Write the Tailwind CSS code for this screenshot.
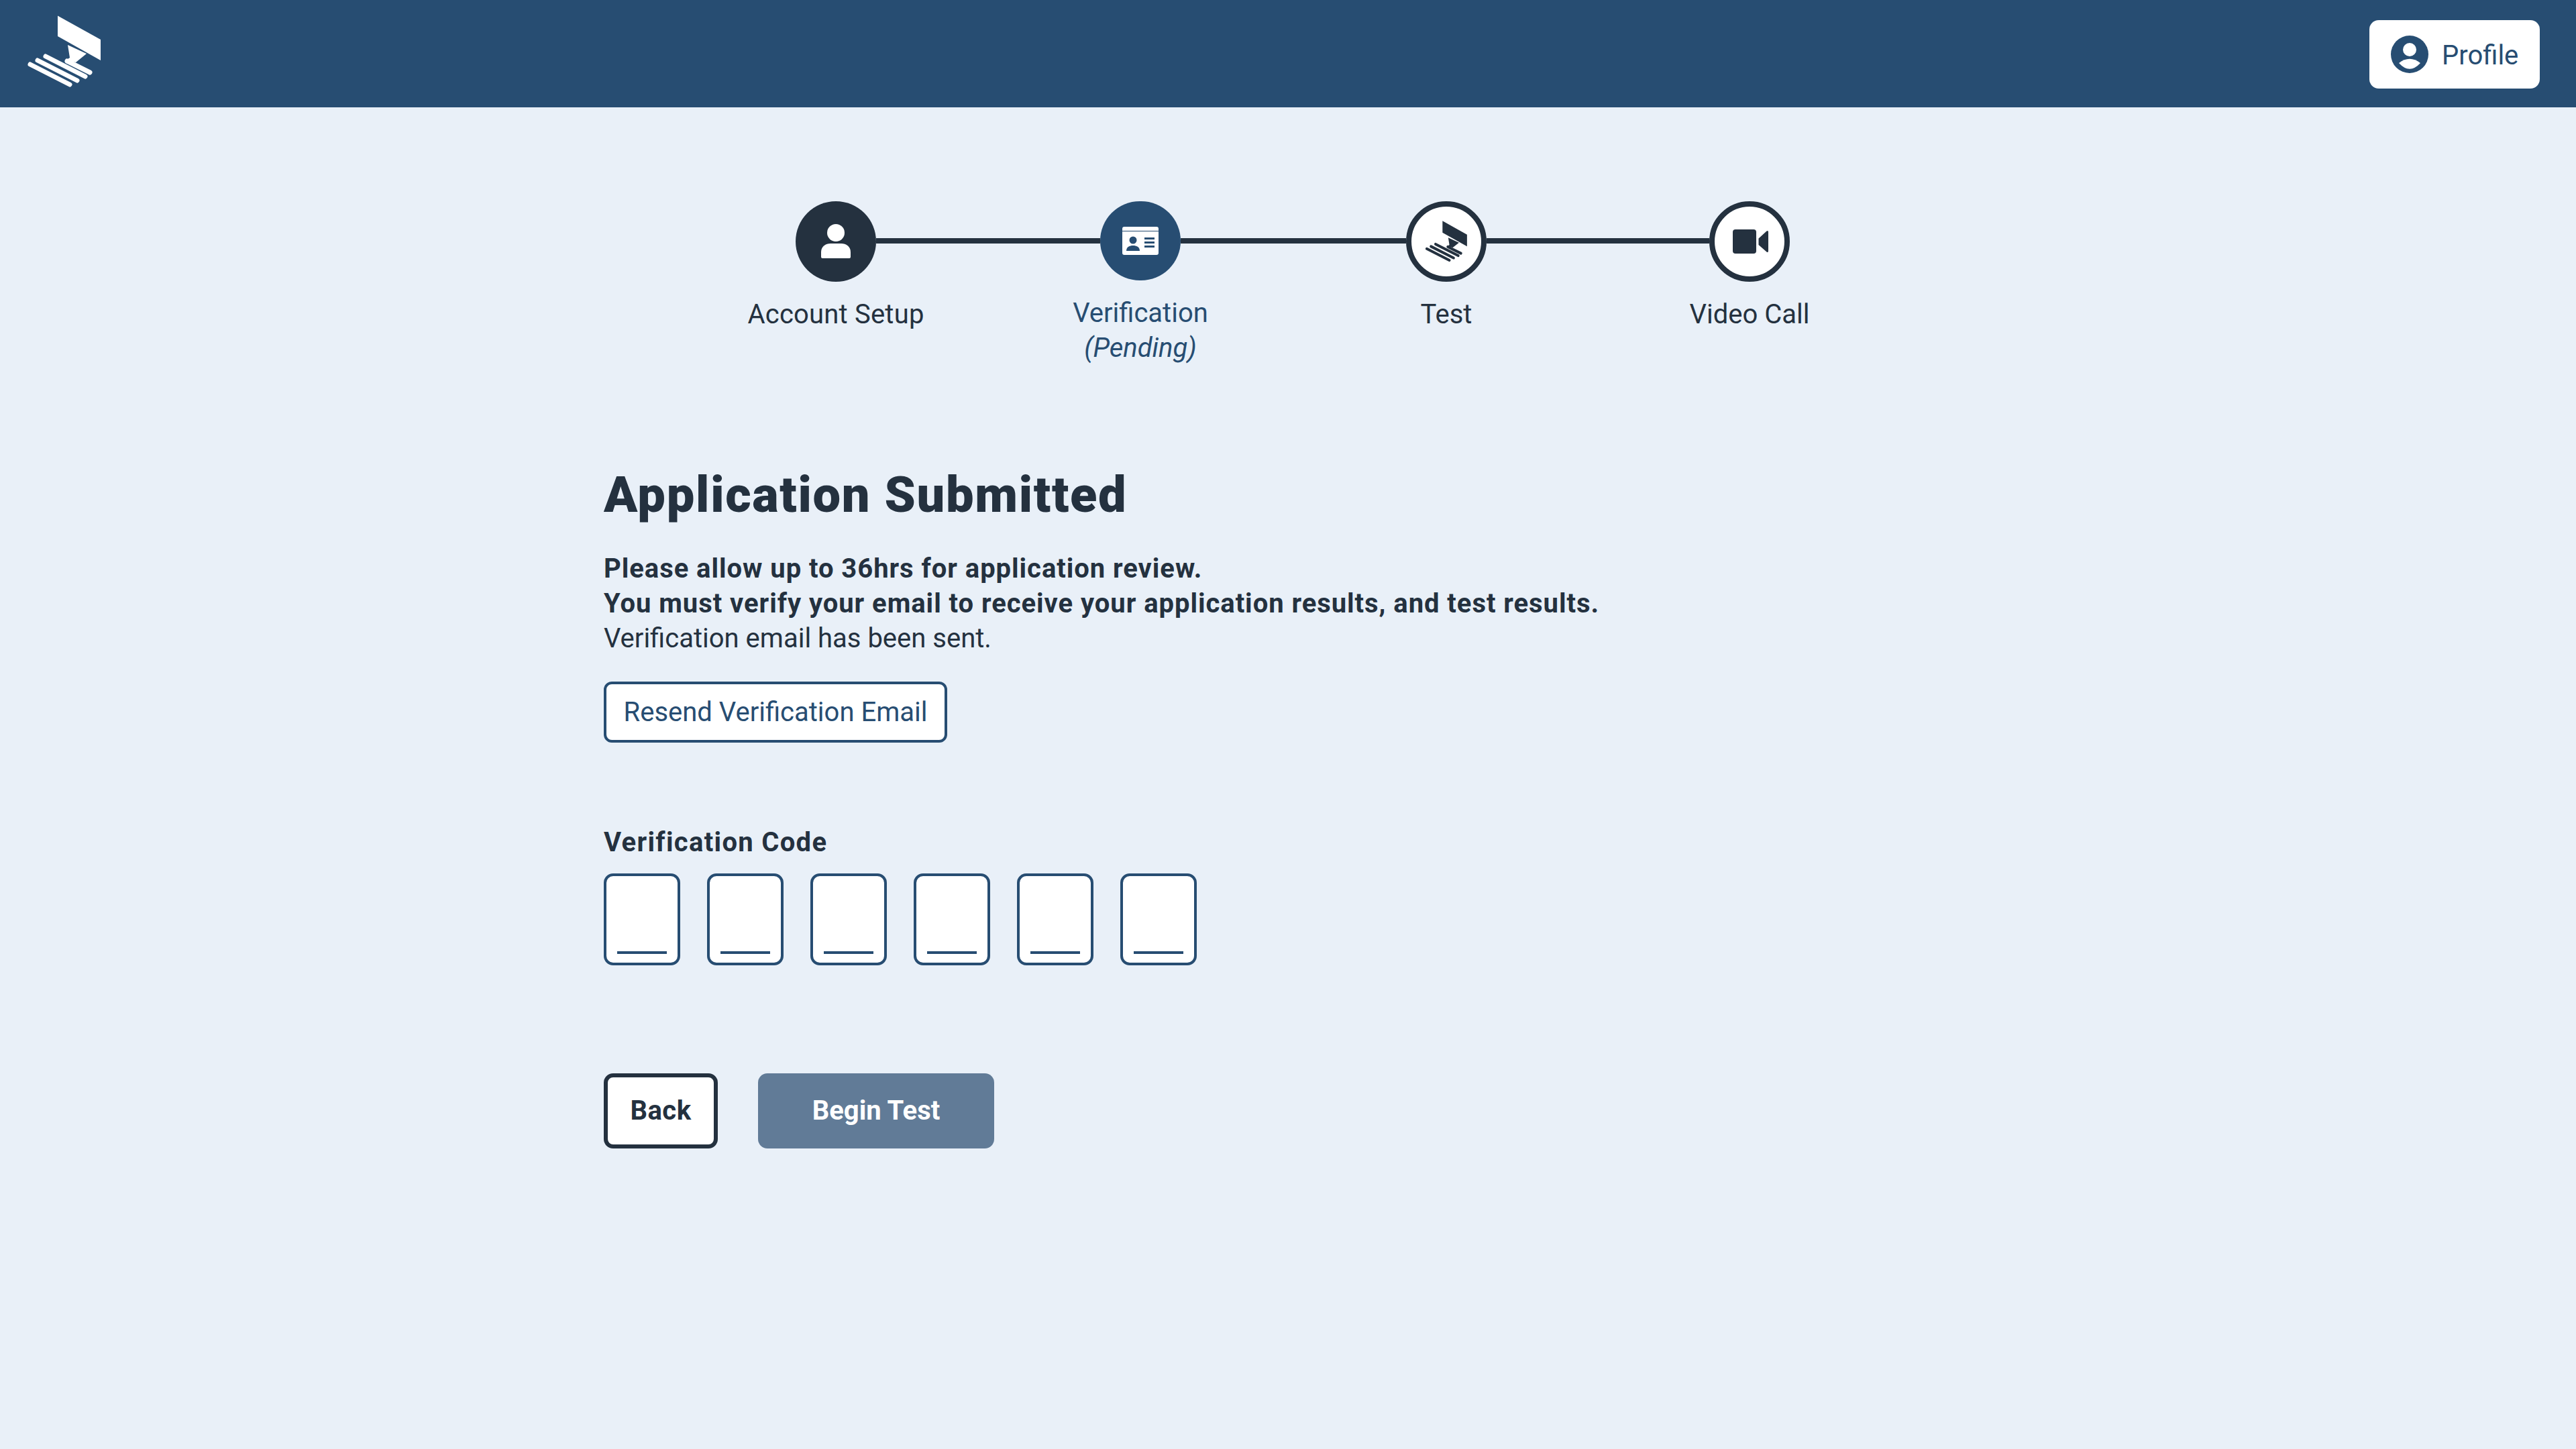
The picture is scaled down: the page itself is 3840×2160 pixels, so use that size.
<!DOCTYPE html>
<html lang="en">
<head>
  <meta charset="UTF-8">
  <meta name="viewport" content="width=device-width, initial-scale=1.0">
  <script src="https://cdn.jsdelivr.net/npm/@tailwindcss/browser@4"></script>
  <title>Application Submitted</title>
</head>

<body class="min-h-screen bg-[#e9f0f8] font-['Roboto',sans-serif] text-[40px] leading-[52px] text-[#24313f]">
  <header class="flex h-[160px] items-start justify-between bg-[#274d72] pl-[40px] pr-[54px]">
    <svg class="mt-[23px] h-[110px] w-[112px] text-white" viewBox="40 23 112 110" fill="currentColor" aria-hidden="true">
      <polygon points="86,23.5 150,59 150,90 86,54" />
      <polygon points="101,67 129,80 113,93 98,90 104,86" />
      <g stroke="currentColor" stroke-width="7" stroke-linecap="round">
        <line x1="45" y1="96" x2="104" y2="126" />
        <line x1="56" y1="90" x2="115" y2="120" />
        <line x1="68" y1="84" x2="127" y2="114" />
        <line x1="100" y1="91" x2="134" y2="108" />
      </g>
    </svg>
    <button class="mt-[30px] flex h-[102px] w-[254px] items-center gap-[20px] rounded-[14px] bg-white pl-[32px] text-[#274d72]">
      <svg class="h-[56px] w-[56px]" viewBox="0 0 56 56" aria-hidden="true">
        <circle cx="28" cy="28" r="28" fill="#274d72" />
        <circle cx="28" cy="21" r="10" fill="#fff" />
        <path d="M12 41Q28 28.4 44 41Q28 58.4 12 41Z" fill="#fff" />
      </svg>
      <span class="pt-[4px]">Profile</span>
    </button>
  </header>

  <main class="pl-[900px]">
    <!-- steps -->
    <div class="ml-[286px] mt-[140px] flex h-[245px]">
      <div class="flex w-[120px] shrink-0 flex-col items-center">
        <div class="flex h-[120px] w-[120px] items-center justify-center rounded-full bg-[#24313f]">
          <svg class="h-[52px] w-[44px]" viewBox="0 0 44 52" fill="#fff" aria-hidden="true">
            <circle cx="22" cy="13" r="13" />
            <path d="M0 42C0 33 7 29 14 29H30C37 29 44 33 44 42V49Q44 51 42 51H2Q0 51 0 49Z" />
          </svg>
        </div>
        <span class="mt-[23px] whitespace-nowrap tracking-[0.2px]">Account Setup</span>
      </div>
      <div class="mt-[55px] h-2 w-[334px] bg-[#24313f]"></div>
      <div class="flex w-[120px] shrink-0 flex-col items-center text-[#274d72]">
        <div class="flex h-[120px] w-[120px] items-center justify-center rounded-full bg-[#274d72]">
          <svg class="h-[42px] w-[54px]" viewBox="0 0 54 42" aria-hidden="true">
            <rect width="54" height="42" rx="3" fill="#fff" />
            <rect y="6" width="54" height="1" fill="#274d72" />
            <circle cx="16" cy="20" r="5.5" fill="#274d72" />
            <path d="M6 36C6 30 11 28 16 28S26 30 26 36Z" fill="#274d72" />
            <path d="M33 16H48V19H33ZM33 22H48V25H33ZM33 28H48V31H33Z" fill="#274d72" />
          </svg>
        </div>
        <span class="mt-[23px] whitespace-nowrap">Verification</span>
        <span class="whitespace-nowrap italic">(Pending)</span>
      </div>
      <div class="mt-[55px] h-2 w-[336px] bg-[#24313f]"></div>
      <div class="flex w-[120px] shrink-0 flex-col items-center">
        <div class="flex h-[120px] w-[120px] items-center justify-center rounded-full border-8 border-[#24313f] bg-white">
          <svg class="h-[63px] w-[64px] text-[#24313f]" viewBox="40 23 112 110" fill="currentColor" aria-hidden="true">
            <polygon points="86,23.5 150,59 150,90 86,54" />
            <polygon points="101,67 129,80 113,93 98,90 104,86" />
            <g stroke="currentColor" stroke-width="7" stroke-linecap="round">
              <line x1="45" y1="96" x2="104" y2="126" />
              <line x1="56" y1="90" x2="115" y2="120" />
              <line x1="68" y1="84" x2="127" y2="114" />
              <line x1="100" y1="91" x2="134" y2="108" />
            </g>
          </svg>
        </div>
        <span class="mt-[23px] whitespace-nowrap">Test</span>
      </div>
      <div class="mt-[55px] h-2 w-[332px] bg-[#24313f]"></div>
      <div class="flex w-[120px] shrink-0 flex-col items-center">
        <div class="flex h-[120px] w-[120px] items-center justify-center rounded-full border-8 border-[#24313f] bg-white">
          <svg class="ml-[3px] h-[36px] w-[54px]" viewBox="0 0 54 36" fill="#24313f" aria-hidden="true">
            <rect width="35" height="36" rx="4" />
            <path d="M38.5 13.5 50.5 2.5Q53 1 53 4V32Q53 35 50.5 33.5L38.5 23Z" />
          </svg>
        </div>
        <span class="mt-[23px] whitespace-nowrap">Video Call</span>
      </div>
    </div>

    <h1 class="mt-[146px] text-[74px] font-black leading-[94px] tracking-[1.7px]">Application Submitted</h1>

    <div class="mt-[37px]">
      <p class="font-bold tracking-[0.95px]">Please allow up to 36hrs for application review.</p>
      <p class="font-bold tracking-[0.95px]">You must verify your email to receive your application results, and test results.</p>
      <p>Verification email has been sent.</p>
    </div>

    <button class="mt-[38px] block h-[91px] w-[512px] rounded-[12px] border-4 border-[#274d72] bg-white text-[#274d72]">Resend Verification Email</button>

    <label class="mt-[123px] block font-bold tracking-[1.3px]">Verification Code</label>
    <div class="mt-[20px] flex gap-[40px]">
      <div class="flex h-[137px] w-[114px] rounded-[14px] border-4 border-[#274d72] bg-white px-4 pb-[13px]"><input type="text" maxlength="1" class="w-full border-b-4 border-[#274d72] bg-transparent text-center outline-none"></div>
      <div class="flex h-[137px] w-[114px] rounded-[14px] border-4 border-[#274d72] bg-white px-4 pb-[13px]"><input type="text" maxlength="1" class="w-full border-b-4 border-[#274d72] bg-transparent text-center outline-none"></div>
      <div class="flex h-[137px] w-[114px] rounded-[14px] border-4 border-[#274d72] bg-white px-4 pb-[13px]"><input type="text" maxlength="1" class="w-full border-b-4 border-[#274d72] bg-transparent text-center outline-none"></div>
      <div class="flex h-[137px] w-[114px] rounded-[14px] border-4 border-[#274d72] bg-white px-4 pb-[13px]"><input type="text" maxlength="1" class="w-full border-b-4 border-[#274d72] bg-transparent text-center outline-none"></div>
      <div class="flex h-[137px] w-[114px] rounded-[14px] border-4 border-[#274d72] bg-white px-4 pb-[13px]"><input type="text" maxlength="1" class="w-full border-b-4 border-[#274d72] bg-transparent text-center outline-none"></div>
      <div class="flex h-[137px] w-[114px] rounded-[14px] border-4 border-[#274d72] bg-white px-4 pb-[13px]"><input type="text" maxlength="1" class="w-full border-b-4 border-[#274d72] bg-transparent text-center outline-none"></div>
    </div>

    <div class="mt-[161px] flex gap-[60px]">
      <button class="h-[112px] w-[170px] rounded-[14px] border-[6px] border-[#24313f] bg-white font-bold tracking-[0.5px]">Back</button>
      <button class="h-[112px] w-[352px] rounded-[14px] bg-[#617b97] font-bold text-white">Begin Test</button>
    </div>
  </main>
</body>
</html>
